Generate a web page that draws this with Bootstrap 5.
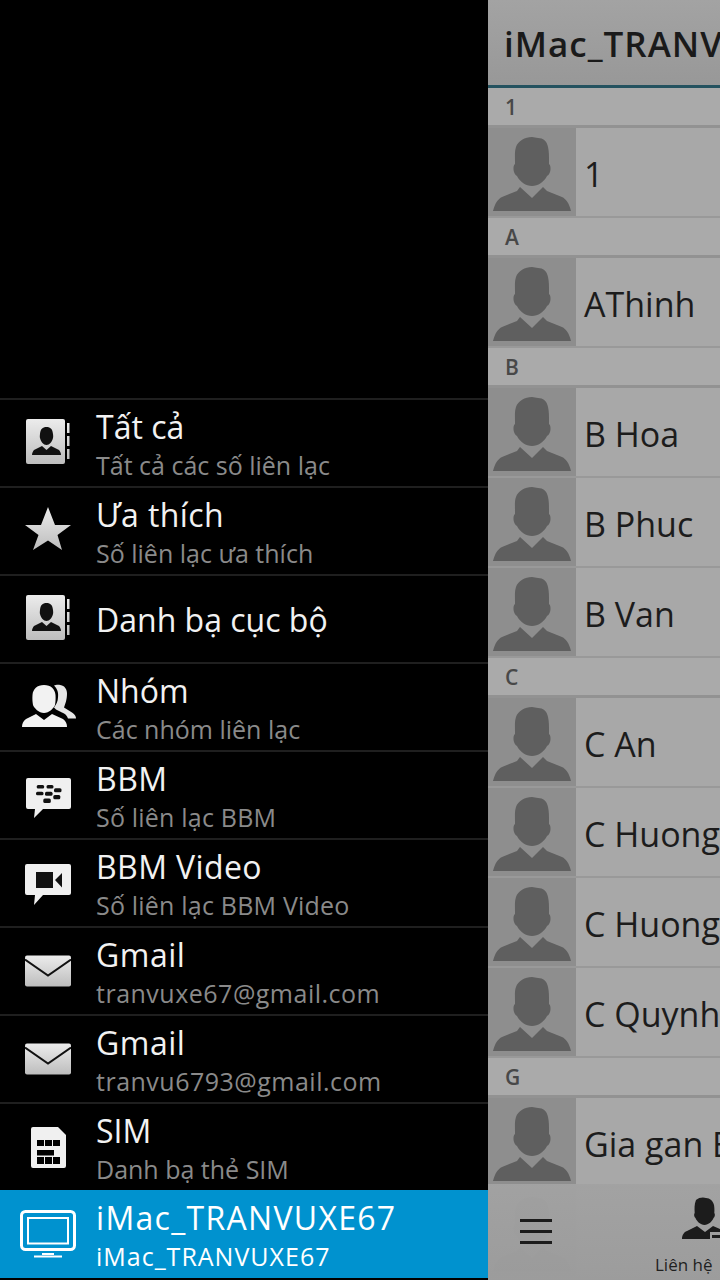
<!DOCTYPE html>
<html lang="vi">
<head>
<meta charset="utf-8">
<title>Danh bạ</title>
<link href="https://cdn.jsdelivr.net/npm/bootstrap@5.3.0/dist/css/bootstrap.min.css" rel="stylesheet">
<style>
html,body{margin:0;height:1280px;overflow:hidden;background:#000}
body{font-family:"Open Sans","Noto Sans","Noto Sans CJK SC",sans-serif}
.shell{width:720px;height:1280px}
.drawer{width:488px;height:1280px;background:#000;padding-bottom:2px}
.mrow{height:88px;border-top:2px solid #1f1f1f;color:#f2f2f2}
.mrow.active-row{background:#0092cf;border-top:0;color:#fff;height:88px}
.mico{width:96px;height:100%}
.mttl{font-size:32px;line-height:38px;padding-top:2px;color:#f2f2f2;white-space:nowrap}
.msub{font-size:25px;line-height:32px;color:#8a8a8a;white-space:nowrap;margin-top:3px}
.active-row .mttl,.active-row .msub{color:#fff}
.active-row .mttl{letter-spacing:1.3px}
.active-row .msub{letter-spacing:1px}
.sp2{letter-spacing:.2px}
.sp4{letter-spacing:.4px}
.sp5{letter-spacing:.5px}
.pane{width:232px;height:1280px;background:#a6a6a6;overflow:hidden;position:relative}
.phead{height:88px;border-bottom:3px solid #24525f;background:linear-gradient(#a3a3a3,#989898);padding:4px 0 0 16px;font-size:35px;font-weight:600;letter-spacing:1px;color:#1a1a1a;white-space:nowrap}
.sect{height:40px;border-bottom:3px solid #929292;background:#aaa;padding-left:17px;font-size:21px;font-weight:600;color:#484848;line-height:39px}
.crow{height:90px;border-bottom:2px solid #999;background:#a8a8a8;white-space:nowrap;font-size:34px;color:#1c1c1c}
.ava{width:88px;height:88px;background:#8e8e8e;flex:none}
.cname{padding:5px 0 0 8px}
.pbar{position:absolute;left:0;right:0;bottom:0;height:96px;background:linear-gradient(rgba(162,162,162,.97),rgba(156,156,156,.98))}
.burger{position:absolute;left:32px;top:35px;width:32px;height:25px;border-top:3px solid #1c1c1c;border-bottom:3px solid #1c1c1c}
.burger::after{content:"";display:block;height:3px;background:#1c1c1c;margin-top:8px}
.tabico{position:absolute;left:194px;top:13px}
.tablbl{position:absolute;left:167px;top:69px;font-size:17px;line-height:24px;color:#1f1f1f;white-space:nowrap}
</style>
</head>
<body>
<svg width="0" height="0" class="position-absolute">
<defs>
<linearGradient id="g1" x1="0" y1="0" x2="0" y2="1"><stop offset="0" stop-color="#ececec"/><stop offset="1" stop-color="#bdbdbd"/></linearGradient>
<symbol id="person" viewBox="0 0 88 88"><path d="M28 19c2-6 9-10 16-10 2 0 4 1 6 1 5 0 9 3 10 9 1 4 1 9 1 14v3c1.500 1 1.500 3 1.500 5 0 3-1.500 6-3.500 7-3 6-9 10-15 10s-12-4-15-10c-2-1-3.500-4-3.500-7 0-2 0-4 1.500-5v-3c0-5-.5-10 1-14z"/><path d="M32 59l12 11 11-11 4 4 15 6c4 2 7 6 9 14H5c2-8 5-12 9-14l15-6z"/></symbol>
<symbol id="book" viewBox="0 0 48 48"><rect x="2" y="0" width="39" height="45" rx="2" fill="url(#g1)"/><path d="M43 4h2.500v10H43zM43 17h2.500v10H43zM43 30h2.500v10H43z" fill="url(#g1)"/><path d="M22.500 8c4 0 6 2 6.500 7 .2 2 .3 3 0 4-1 4-3.500 7-6.500 7s-5.500-3-6.500-7c-.3-1-.2-2 0-4 .5-5 2.500-7 6.500-7zM18 27l4.500 4 4.500-4 8 4c1 1 2 3 2 5H8c0-2 1-4 2-5z" fill="#111"/></symbol>
<symbol id="mail" viewBox="0 0 46 32"><rect width="46" height="31" y=".5" rx="2" fill="url(#g1)"/><path d="M0 4.500l23 16 23-16" fill="none" stroke="#111" stroke-width="2"/></symbol>
</defs>
</svg>
<div class="shell d-flex">
  <div class="drawer d-flex flex-column justify-content-end">
    <div class="mrow d-flex align-items-center">
      <div class="mico d-flex align-items-center justify-content-center"><svg width="48" height="48"><use href="#book"/></svg></div>
      <div><div class="mttl">Tất cả</div><div class="msub">Tất cả các số liên lạc</div></div>
    </div>
    <div class="mrow d-flex align-items-center">
      <div class="mico d-flex align-items-center justify-content-center"><svg width="48" height="48" viewBox="0 0 48 48"><path d="M24 0l7 18h16L33.500 28 38 43 24 33.500 9 43l5.500-15L1 18h16z" fill="url(#g1)"/></svg></div>
      <div><div class="mttl sp4">Ưa thích</div><div class="msub">Số liên lạc ưa thích</div></div>
    </div>
    <div class="mrow d-flex align-items-center">
      <div class="mico d-flex align-items-center justify-content-center"><svg width="48" height="48"><use href="#book"/></svg></div>
      <div><div class="mttl">Danh bạ cục bộ</div></div>
    </div>
    <div class="mrow d-flex align-items-center">
      <div class="mico d-flex align-items-center justify-content-center"><svg width="56" height="48" viewBox="0 0 56 48"><path d="M34 2.500c2-1 6-1 8 0 3 1 5 4 5 8 0 3-.5 6-1 8l-2 6 8 5c3 2 4 4 4 6h-8c-1-3-3-5-6-6l-6-3-2-2c2-3 4-6 4-10 .5-4 0-8-4-12z" fill="#e6e6e6"/><path d="M24 2c7 0 11 4 11.500 10 .3 4 0 7-.5 10-1 3-6 8-11 8s-10-5-11-8c-.5-3-.8-6-.5-10C13 6 17 2 24 2zM16 31l8 6 8-6 11 5c3 2 4 5 4 8H2c0-3 1-6 4-8z" fill="#f2f2f2"/></svg></div>
      <div><div class="mttl">Nhóm</div><div class="msub">Các nhóm liên lạc</div></div>
    </div>
    <div class="mrow d-flex align-items-center">
      <div class="mico d-flex align-items-center justify-content-center"><svg width="48" height="48" viewBox="0 0 48 48"><g transform="translate(2 7)"><path d="M2 0h41a2 2 0 0 1 2 2v27a2 2 0 0 1-2 2H17l-9 9 1-9H2a2 2 0 0 1-2-2V2a2 2 0 0 1 2-2z" fill="#f0f0f0"/><g fill="#111"><rect x="10.700" y="7" width="7.500" height="3.500" rx="1.500"/><rect x="20.500" y="7" width="7" height="3.500" rx="1.500"/><rect x="10" y="13.700" width="7.500" height="3.500" rx="1.500"/><rect x="19" y="13.700" width="7.500" height="4" rx="1.500"/><rect x="28" y="10.300" width="7.500" height="4" rx="1.500"/><rect x="17.300" y="20.500" width="7.500" height="4.500" rx="1.500"/><rect x="27.300" y="17" width="7" height="4.300" rx="1.500"/></g></g></svg></div>
      <div><div class="mttl sp5">BBM</div><div class="msub sp2">Số liên lạc BBM</div></div>
    </div>
    <div class="mrow d-flex align-items-center">
      <div class="mico d-flex align-items-center justify-content-center"><svg width="48" height="48" viewBox="0 0 48 48"><g transform="translate(1 5)"><path d="M2 0h42a2 2 0 0 1 2 2v27a2 2 0 0 1-2 2H18l-9 10 1-10H2a2 2 0 0 1-2-2V2a2 2 0 0 1 2-2z" fill="#f0f0f0"/><path d="M11 8h17v16H11zM30 16l7-7v14.500z" fill="#111"/></g></svg></div>
      <div><div class="mttl sp4">BBM Video</div><div class="msub sp2">Số liên lạc BBM Video</div></div>
    </div>
    <div class="mrow d-flex align-items-center">
      <div class="mico d-flex align-items-center justify-content-center"><svg width="46" height="32"><use href="#mail"/></svg></div>
      <div><div class="mttl sp5">Gmail</div><div class="msub sp5">tranvuxe67@gmail.com</div></div>
    </div>
    <div class="mrow d-flex align-items-center">
      <div class="mico d-flex align-items-center justify-content-center"><svg width="46" height="32"><use href="#mail"/></svg></div>
      <div><div class="mttl sp5">Gmail</div><div class="msub sp5">tranvu6793@gmail.com</div></div>
    </div>
    <div class="mrow d-flex align-items-center">
      <div class="mico d-flex align-items-center justify-content-center"><svg width="35" height="41" viewBox="0 0 35 41"><path fill-rule="evenodd" d="M2 0h25l8 8v31a2 2 0 0 1-2 2H2a2 2 0 0 1-2-2V2a2 2 0 0 1 2-2zM6 13v6h7v-6zM14 13v6h7v-6zM22 13v6h7v-6zM6 23v5.500h17V23zM6 30v7h7v-7zM14 30v7h7v-7zM22 30v7h7v-7z" fill="#f0f0f0"/></svg></div>
      <div><div class="mttl">SIM</div><div class="msub">Danh bạ thẻ SIM</div></div>
    </div>
    <div class="mrow active-row d-flex align-items-center">
      <div class="mico d-flex align-items-center justify-content-center"><svg width="56" height="48" viewBox="0 0 56 48" fill="none" stroke="#fff"><rect x="1.500" y="1.500" width="53" height="38" rx="4" stroke-width="3"/><rect x="8" y="8" width="40" height="25.500" stroke-width="2"/><path d="M14 46.500h28" stroke-width="2"/><path d="M22 44h12" stroke-width="2"/></svg></div>
      <div><div class="mttl">iMac_TRANVUXE67</div><div class="msub">iMac_TRANVUXE67</div></div>
    </div>
  </div>
  <div class="pane">
    <div class="phead d-flex align-items-center">iMac_TRANVUXE67</div>
    <div class="sect">1</div>
    <div class="crow d-flex align-items-center"><svg class="ava" fill="#5f5f5f"><use href="#person"/></svg><span class="cname">1</span></div>
    <div class="sect">A</div>
    <div class="crow d-flex align-items-center"><svg class="ava" fill="#5f5f5f"><use href="#person"/></svg><span class="cname">AThinh</span></div>
    <div class="sect">B</div>
    <div class="crow d-flex align-items-center"><svg class="ava" fill="#5f5f5f"><use href="#person"/></svg><span class="cname">B Hoa</span></div>
    <div class="crow d-flex align-items-center"><svg class="ava" fill="#5f5f5f"><use href="#person"/></svg><span class="cname">B Phuc</span></div>
    <div class="crow d-flex align-items-center"><svg class="ava" fill="#5f5f5f"><use href="#person"/></svg><span class="cname">B Van</span></div>
    <div class="sect">C</div>
    <div class="crow d-flex align-items-center"><svg class="ava" fill="#5f5f5f"><use href="#person"/></svg><span class="cname">C An</span></div>
    <div class="crow d-flex align-items-center"><svg class="ava" fill="#5f5f5f"><use href="#person"/></svg><span class="cname">C Huong</span></div>
    <div class="crow d-flex align-items-center"><svg class="ava" fill="#5f5f5f"><use href="#person"/></svg><span class="cname">C Huong</span></div>
    <div class="crow d-flex align-items-center"><svg class="ava" fill="#5f5f5f"><use href="#person"/></svg><span class="cname">C Quynh</span></div>
    <div class="sect">G</div>
    <div class="crow d-flex align-items-center"><svg class="ava" fill="#5f5f5f"><use href="#person"/></svg><span class="cname">Gia gan B</span></div>
    <div class="crow d-flex align-items-center"><svg class="ava" fill="#5f5f5f"><use href="#person"/></svg></div>
    <div class="pbar">
      <div class="burger"></div>
      <svg class="tabico" width="50" height="44" viewBox="0 0 50 44" fill="#1c1c1c"><path d="M14 3c3-3 8-3 10-2 4 0 7 3 8 7 .5 3 .5 6 .3 8 1 1 .7 4-.8 5-1 3-5 7-9 7s-8-4-9-7c-1.500-1-1.800-4-.8-5-.2-4-.5-9 1.300-13z"/><path d="M15 29l8 6 8-6 12 5c2 1 5 3 5 8H0c0-4 2-7 5-8z"/><path d="M28 35h22v9H28z" fill="#9f9f9f"/><path d="M30 38h20v3H30z"/></svg>
      <div class="tablbl">Liên hệ</div>
    </div>
  </div>
</div>
</body>
</html>
